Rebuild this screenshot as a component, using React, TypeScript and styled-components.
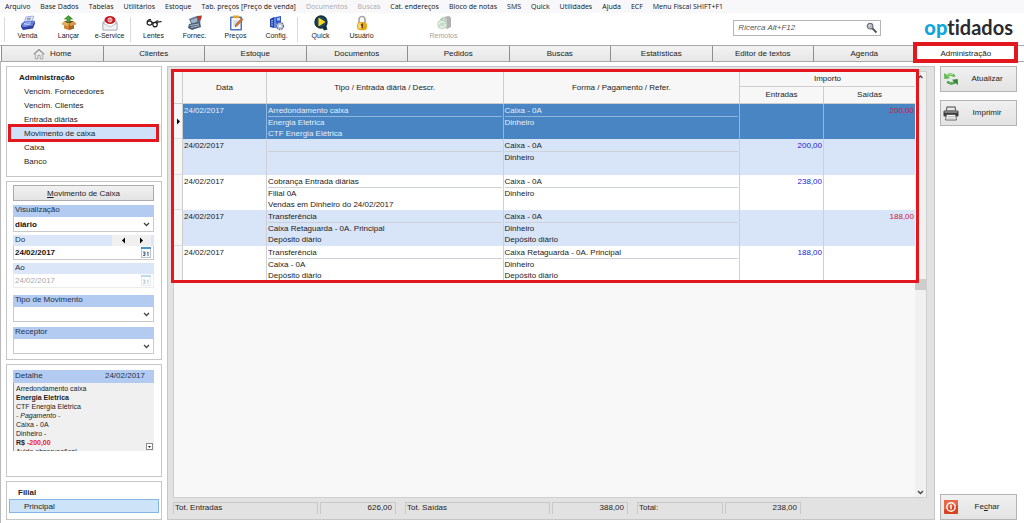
import React, { ReactNode } from "react";
import styled, { createGlobalStyle, css } from "styled-components";

const RED = "#e3181f";
const LINE = "#c6c6c6";

const GlobalStyle = createGlobalStyle`
  * { box-sizing: border-box; }
  body {
    margin: 0;
    background: #fff;
    color: #222;
    font-family: "Liberation Sans", Arial, sans-serif;
    font-size: 8px;
    line-height: 14px;
  }
  button, input, select { font: inherit; color: inherit; margin: 0; padding: 0; }
  svg { display: block; flex: none; }
`;

const Page = styled.div`
  display: flex;
  flex-direction: column;
  min-height: 100vh;
`;

/* ---------- menu bar ---------- */

const MenuBar = styled.nav`
  display: flex;
  gap: 10px;
  height: 13px;
  padding-left: 5px;
  background: #f8f8fa;
  font-family: "Open Sans", "Noto Sans", sans-serif;
  font-size: 7px;
`;

const MenuItem = styled.button`
  border: 0;
  background: none;
  line-height: 13px;
  white-space: nowrap;
  color: #111;
  &:disabled { color: #a9a9a9; }
`;

/* ---------- toolbar ---------- */

const ToolBar = styled.header`
  display: flex;
  align-items: stretch;
  height: 32px;
  padding: 2px 11px 0 4px;
`;

const ToolSeparator = styled.span`
  width: 1px;
  margin: 2px 2px 3px 0;
  background: #dcdcdc;
`;

const Tool = styled.button`
  display: flex;
  flex-direction: column;
  align-items: center;
  width: 41px;
  border: 0;
  background: none;
  font-size: 7px;
  line-height: 10px;
  white-space: nowrap;
  &:disabled { color: #a4a4a4; }
  &:disabled svg { opacity: 0.45; }
`;

const ToolGap = styled.span`
  width: 41px;
`;

const SearchBox = styled.form`
  display: flex;
  align-items: center;
  width: 148px;
  height: 16px;
  margin: 5px 43px 0 auto;
  padding: 0 2px 0 4px;
  border: 1px solid #b5b5b5;
`;

const SearchInput = styled.input`
  flex: 1;
  min-width: 0;
  border: 0;
  outline: 0;
  background: none;
  font-style: italic;
  &::placeholder { color: #555; opacity: 1; }
`;

const Logo = styled.span`
  font-family: Lato, sans-serif;
  font-size: 20px;
  font-weight: 700;
  font-variant-ligatures: none;
  line-height: 24px;
  color: #2b2b2f;
  b { font-weight: 900; color: #12a5dc; }
`;

/* ---------- tabs ---------- */

const TabStrip = styled.nav`
  display: flex;
  height: 17px;
  padding: 0 8px 0 1px;
  border-top: 1px solid #a8a8a8;
  border-bottom: 1px solid #a8a8a8;
  background: #fff;
`;

const Tab = styled.button<{ $active?: boolean }>`
  position: relative;
  display: flex;
  flex: 1 1 0;
  align-items: center;
  justify-content: center;
  gap: 5px;
  border: 0;
  border-left: 1px solid #8e8e8e;
  background: linear-gradient(#f3f3f3, #e6e6e6);
  ${(p) =>
    p.$active &&
    css`
      background: #fff;
      &::after {
        content: "";
        position: absolute;
        inset: -4px -2px -2px -3px;
        border: 4px solid ${RED};
      }
    `}
`;

/* ---------- body columns ---------- */

const Body = styled.div`
  display: flex;
  flex: 1;
  gap: 5px;
  padding: 4px 7px 3px 5px;
  border-left: 1px solid #b9b9b9;
`;

const Sidebar = styled.aside`
  display: flex;
  flex-direction: column;
  gap: 4px;
  width: 156px;
`;

const Panel = styled.section<{ $grow?: boolean; $pad: string }>`
  flex: ${(p) => (p.$grow ? "1 0 auto" : "none")};
  padding: ${(p) => p.$pad};
  border: 1px solid ${LINE};
`;

const PanelTitle = styled.h2`
  height: 14px;
  margin: 0;
  padding-left: 9px;
  font-size: 8px;
  line-height: 16px;
`;

const NavLink = styled.a<{ $marked?: boolean; $current?: boolean }>`
  position: relative;
  display: block;
  height: 14px;
  padding-left: 14px;
  line-height: 16px;
  color: #222;
  text-decoration: none;
  ${(p) =>
    p.$marked &&
    css`
      background: #cfe1f8;
      &::after {
        content: "";
        position: absolute;
        inset: -2px -1px -2px -2px;
        border: 3px solid ${RED};
      }
    `}
  ${(p) =>
    p.$current &&
    css`
      border: 1px solid #84b6e6;
      background: #cce3f8;
      line-height: 13px;
    `}
`;

const WideButton = styled.button`
  display: block;
  width: 100%;
  height: 16px;
  padding-top: 1px;
  border: 1px solid #acacac;
  background: linear-gradient(#f1f1f1, #e4e4e4);
`;

const Field = styled.div<{ $gap: number }>`
  margin-top: ${(p) => p.$gap}px;
`;

const FieldHead = styled.div<{ $light?: boolean }>`
  display: flex;
  align-items: flex-start;
  height: ${(p) => (p.$light ? 11 : 12)}px;
  padding-left: 2px;
  background: ${(p) => (p.$light ? "#dbe6f8" : "#b3cbf1")};
  color: #23314f;
  line-height: 10px;
  label { flex: 1; }
`;

const Stepper = styled.span`
  display: flex;
  width: 42px;
  height: 11px;
  padding-left: 2px;
  background: #f0f0f0;
  border-right: 3px solid #dbe6f8;
`;

const StepButton = styled.button`
  display: flex;
  flex: 1;
  align-items: center;
  justify-content: center;
  border: 0;
  background: none;
`;

const Control = styled.div<{ $tall?: boolean; $off?: boolean }>`
  display: flex;
  align-items: center;
  height: ${(p) => (p.$tall ? 15 : 14)}px;
  padding-right: 2px;
  border: 1px solid ${(p) => (p.$off ? "#ececec" : "#c9c9c9")};
  border-top: 0;
  color: ${(p) => (p.$off ? "#a8a8a8" : "#111")};
  font-weight: ${(p) => (p.$off ? 400 : 700)};
  input, select {
    flex: 1;
    min-width: 0;
    height: 12px;
    padding-left: 1px;
    border: 0;
    outline: 0;
    background: none;
    appearance: none;
    color: inherit;
  }
`;

const IconButton = styled.button`
  border: 0;
  background: none;
  &:disabled { opacity: 0.35; }
`;

const DetailHead = styled.div`
  display: flex;
  justify-content: space-between;
  height: 13px;
  padding: 0 9px 0 2px;
  background: #b3cbf1;
  color: #23314f;
  line-height: 12px;
`;

const DetailBox = styled.div`
  position: relative;
  height: 68px;
  padding: 1px 0 0 2px;
  overflow: hidden;
  border-left: 1px solid #9a9a9a;
  background: #f0f0f0;
  font-size: 7px;
  line-height: 9px;
  p { margin: 0; }
  em { font-style: italic; }
  mark { background: none; color: #ee1c25; }
`;

const ExpandButton = styled.button`
  position: absolute;
  right: 1px;
  bottom: 1px;
  display: flex;
  align-items: center;
  justify-content: center;
  width: 7px;
  height: 7px;
  border: 1px solid #8b8b8b;
  background: #fff;
`;

/* ---------- central grid ---------- */

const Main = styled.main`
  display: flex;
  flex: 1;
  flex-direction: column;
  min-width: 0;
  padding: 4px 7px 5px 5px;
  border: 1px solid ${LINE};
  background: #e2e2e2;
`;

const GridFrame = styled.div`
  display: flex;
  flex: 1;
  border: 1px solid #cfcfcf;
  background: #f8f8f8;
`;

const GridArea = styled.div`
  flex: 1;
  min-width: 0;
`;

const MarkedTable = styled.div`
  position: relative;
  &::after {
    content: "";
    position: absolute;
    inset: -3px -4px -2px -3px;
    border: 3px solid ${RED};
    pointer-events: none;
  }
`;

const Table = styled.table`
  width: 100%;
  table-layout: fixed;
  border-collapse: separate;
  border-spacing: 0;
`;

const Th = styled.th<{ $sub?: boolean }>`
  padding: 0;
  border-right: 1px solid #cdcdcd;
  border-bottom: 1px solid #cdcdcd;
  background: #f7f7f7;
  font-weight: 400;
  line-height: ${(p) => (p.$sub ? 16 : 14)}px;
  &:last-child { border-right: 0; }
`;

const Row = styled.tr<{ $selected?: boolean }>`
  --line: #cdd0d6;
  height: 35px;
  background: #fff;
  line-height: 12px;
  &:nth-child(even) {
    height: 36px;
    background: #d8e4f7;
  }
  ${(p) =>
    p.$selected &&
    css`
      --line: #8fb6de;
      background: #4985c2;
      color: #e6effa;
    `}
`;

const Td = styled.td<{ $tone?: "in" | "out" }>`
  padding: 0 1px;
  border-right: 1px solid var(--line);
  vertical-align: top;
  text-align: ${(p) => (p.$tone ? "right" : "left")};
  line-height: 13px;
  color: ${(p) => (p.$tone === "in" ? "#2020dd" : p.$tone === "out" ? "#d01540" : "inherit")};
  &:last-child { border-right: 0; }
`;

const MarkerCell = styled.td`
  padding: 0 0 0 2px;
  border-right: 1px solid #cdcdcd;
  border-bottom: 1px solid #dedede;
  background: #f7f7f7;
`;

const Line = styled.div<{ $first?: boolean }>`
  height: ${(p) => (p.$first ? 13 : 11)}px;
  border-bottom: ${(p) => (p.$first ? "1px solid var(--line)" : "0")};
  line-height: ${(p) => (p.$first ? 13 : 11)}px;
  white-space: nowrap;
`;

const ScrollTrack = styled.div`
  display: flex;
  flex-direction: column;
  align-items: center;
  width: 11px;
  background: #f1f1f1;
`;

const ScrollSpace = styled.span`
  flex: 1;
`;

const ScrollThumb = styled.span`
  width: 11px;
  height: 11px;
  background: #cdcdcd;
`;

const Totals = styled.footer`
  display: flex;
  gap: 9px;
  padding-top: 4px;
`;

const TotalGroup = styled.div`
  display: flex;
  gap: 2px;
`;

const TotalCell = styled.span<{ $w: number; $right?: boolean }>`
  width: ${(p) => p.$w}px;
  height: 12px;
  padding: 0 3px 0 1px;
  border: 1px solid #c9c9c9;
  border-bottom: 0;
  line-height: 10px;
  text-align: ${(p) => (p.$right ? "right" : "left")};
`;

/* ---------- right actions ---------- */

const Actions = styled.aside`
  display: flex;
  flex-direction: column;
  gap: 8px;
  width: 77px;
`;

const ActionButton = styled.button<{ $bottom?: boolean }>`
  display: flex;
  align-items: center;
  height: 26px;
  padding: 0 1px 0 2px;
  margin-top: ${(p) => (p.$bottom ? "auto" : "0")};
  border: 1px solid #b4b4b4;
  background: linear-gradient(#f0f0f0, #e3e3e3);
  span { flex: 1; text-align: center; }
`;

/* ---------- drawings ---------- */

const Svg = ({ children, s = 16 }: { children: ReactNode; s?: number }) => (
  <svg width={s} height={s} viewBox="0 0 16 16" aria-hidden="true">
    {children}
  </svg>
);

const RegisterIcon = () => (
  <Svg>
    <path d="M6 2l7-1 1 1-3 5-7 1z" fill="#e9eefb" stroke="#7d8ec4" strokeWidth=".7" />
    <path d="M7 3.500l4-.5M6.500 5l4-.5" stroke="#5d6fb5" strokeWidth=".8" />
    <path d="M1 9l3-2.500 10.500-1-2 5-9.500 1.500z" fill="#5b78dd" />
    <path d="M1 9l2 3 9.500-1.500 2-5 .5 3-2 5-10 1.500-2-3z" fill="#2b3fa5" />
    <path d="M4 8.500l7-.9M3.700 10l7-.9" stroke="#dce4ff" strokeWidth=".8" />
  </Svg>
);

const BoxIcon = () => (
  <Svg>
    <path d="M3 6.500h10l2.500 2.500-2.500 1v3.500L8 15l-5-1.500V10L.5 9z" fill="#c98335" />
    <path d="M3 6.500L8 8.500l5-2-5-1z" fill="#6d3f12" />
    <path d="M3 6.500L8 8.500 6.500 11.500.5 9z" fill="#e8ad60" />
    <path d="M13 6.500L8 8.500l1.500 3 6-2.500z" fill="#d9974a" />
    <path d="M8 8.500l1.500 3 3.500-1.500v3.500L8 15z" fill="#a9621d" />
    <path d="M6 7.500V4H3.500L7.500.6 11.500 4H9v3.500z" fill="#4aa832" stroke="#1f6d16" strokeWidth=".6" />
  </Svg>
);

const MailIcon = () => (
  <Svg>
    <path d="M1 7l7-5 7 5v8H1z" fill="#d5d8de" stroke="#9599a3" strokeWidth=".6" />
    <path d="M3 5h10v5l-5 3-5-3z" fill="#fff" />
    <ellipse cx="8" cy="5" rx="5.500" ry="4" fill="#c31f26" />
    <circle cx="8" cy="5" r="2" fill="none" stroke="#fff" strokeWidth=".9" />
    <path d="M8 3.500V6" stroke="#fff" />
    <path d="M1 8l7 4 7-4v7H1z" fill="#f0f1f4" stroke="#9599a3" strokeWidth=".6" />
  </Svg>
);

const GlassesIcon = () => (
  <Svg>
    <g fill="none" stroke="#1c1c1c" strokeWidth="1.200">
      <ellipse cx="3.600" cy="8" rx="2.500" ry="2.100" />
      <ellipse cx="9" cy="9.600" rx="2.200" ry="2.300" />
      <path d="M6 7.800q.8-.6 1.200.4M1.200 7q.3-2 2.300-2.300h1.500M10.800 8.400q1-2 4.700-1.800M9.500 7.200q.8-1.500 2.700-1.200" />
    </g>
  </Svg>
);

const SupplierIcon = () => (
  <Svg>
    <path d="M2 4l8-3 4 1-1 7-8 2z" fill="#56728f" />
    <path d="M3.500 5l7-2.500L10 7 5 8.500z" fill="#9fb4c9" />
    <path d="M10 1l5-.5-1 4-3 1z" fill="#b6372f" />
    <path d="M2 9l11-2 1 5-9 3-4-2z" fill="#4a5f78" />
    <path d="M3 10.500l9-1.500M4 12.500l8-1.800" stroke="#c6d4e2" strokeWidth=".8" />
  </Svg>
);

const ClipboardIcon = () => (
  <Svg>
    <rect x="2" y="1.500" width="12" height="14" rx="1" fill="#4f76b8" />
    <rect x="3.500" y="3" width="9" height="11" fill="#fdfdfd" />
    <rect x="5" y=".5" width="6" height="2.800" rx=".8" fill="#e1a62e" />
    <path d="M5 6h5M5 8h4M5 10h3" stroke="#9db3da" strokeWidth=".8" />
    <path d="M7 12l1-3 5.500-6 1.500 1.500-5.500 6z" fill="#dd7c31" stroke="#7b3d14" strokeWidth=".5" />
  </Svg>
);

const ConfigIcon = () => (
  <Svg>
    <path d="M1 4l4-2v11l-4-1z" fill="#2743a8" />
    <rect x="5" y="2" width="3.500" height="11" fill="#5c86ea" />
    <path d="M7 2l5-1v7H7z" fill="#2f55c8" />
    <path d="M8 3l3-.6v3.200H8z" fill="#a9c2fb" />
    <path d="M2 6l2-.6M2 8l2-.4M2 10h2" stroke="#d3defc" strokeWidth=".8" />
    <circle cx="11" cy="11" r="3.600" fill="#b4bfd4" stroke="#5d6c92" strokeWidth="1.200" strokeDasharray="1.600 1" />
    <circle cx="11" cy="11" r="1.300" fill="#fff" />
  </Svg>
);

const QuickIcon = () => (
  <Svg>
    <circle cx="8" cy="7" r="5.800" fill="#1c4a66" stroke="#14303d" strokeWidth="1.800" />
    <path d="M9 12l4-2 1.500 4.500-3.500 1z" fill="#14303d" />
    <path d="M5.500 2.600l7 4.400-7 4.400z" fill="#ffd91a" />
  </Svg>
);

const LockIcon = () => (
  <Svg>
    <path d="M5 8V4.500a3 3 0 0 1 6 0V8" fill="none" stroke="#a8a8a8" strokeWidth="1.700" />
    <rect x="3" y="7" width="10" height="8.300" rx="3.500" fill="#e9a81c" />
    <rect x="4" y="8" width="4" height="6" rx="2" fill="#f9d870" />
    <path d="M7 10l1.200-.6v3.800" fill="none" stroke="#5a3a08" strokeWidth="1.400" />
  </Svg>
);

const RemoteIcon = () => (
  <Svg>
    <path d="M8 2l5-1 2 1.500V12l-4 2-3-2z" fill="#555" />
    <path d="M8 2l3 1.500V14l-3-2z" fill="#8a8a8a" />
    <circle cx="6" cy="9.500" r="4.800" fill="#7fb584" />
    <path d="M3 9.500a3 3 0 0 1 5-2M9 9.500a3 3 0 0 1-5 2" stroke="#fff" fill="none" />
    <path d="M3.500 4.500l4-3v5z" fill="#4a9a52" />
  </Svg>
);

const SearchIcon = () => (
  <Svg s={12}>
    <circle cx="5.500" cy="5.500" r="3.800" fill="#b9bcc2" stroke="#70747d" strokeWidth="1.600" />
    <path d="M4 5.500a1.600 1.600 0 0 1 1.600-1.600" stroke="#fff" fill="none" />
    <path d="M8.500 8.500l5.500 5.500" stroke="#4d4d4d" strokeWidth="2.400" />
  </Svg>
);

const HomeIcon = () => (
  <Svg s={12}>
    <path d="M3 8v6.500h3.500V10h3v4.500H13V8" fill="#e4e4e4" stroke="#999" />
    <path d="M1 8.500l7-6.500 7 6.500" fill="none" stroke="#8c8c8c" strokeWidth="1.700" />
  </Svg>
);

const RefreshIcon = () => (
  <Svg>
    <path d="M1 2l.3 6 5.700-.8-1.800-1.700q2.800-2 5.800.7l1.500-1.700Q8.500.6 3.200 3.800z" fill="#58b947" />
    <path d="M15 14l-.3-6-5.700.8 1.800 1.700q-2.800 2-5.800-.7L3.500 11.500q4 3.900 9.300.7z" fill="#2f8b33" />
    <path d="M3.500 4.700q3.500-2.500 6.500-1" stroke="#b4e79b" fill="none" />
    <path d="M5 11.500q3.500 2 6.500.2" stroke="#79c765" fill="none" />
  </Svg>
);

const PrinterIcon = () => (
  <Svg>
    <path d="M3.500 1.500h9l.5 4H3z" fill="#444" />
    <path d="M4.300 2.500h7.400l.3 3H4z" fill="#e9e9e9" />
    <rect x=".5" y="5.500" width="15" height="6" rx="1.200" fill="#3c3c3c" />
    <path d="M1.500 7h13" stroke="#a9a9a9" strokeWidth="1.200" />
    <path d="M3.500 9.500h9l1 5.500h-11z" fill="#f7f7f7" stroke="#4a4a4a" strokeWidth=".8" />
    <path d="M4.500 11.500h7M4.300 13.200h7.400" stroke="#aaa" strokeWidth=".7" />
  </Svg>
);

const PowerIcon = () => (
  <Svg>
    <rect x="1" y="1" width="14" height="14" rx="1" fill="#d9421f" />
    <path d="M1 1h14v5Q8 7 1 11z" fill="#e8694a" />
    <circle cx="8" cy="8" r="4.200" fill="none" stroke="#fff" strokeWidth="1.400" />
    <path d="M8 5.800v4.400" stroke="#fff" strokeWidth="1.500" />
  </Svg>
);

const CalendarIcon = () => (
  <svg width="10" height="11" viewBox="0 0 10 11" aria-hidden="true">
    <rect x=".5" y=".5" width="9" height="10" fill="#f6fafd" stroke="#b9c6d2" />
    <path d="M0 1h10" stroke="#4d94c4" strokeWidth="2" />
    <path d="M2 5h2v3.500H2M2.500 6.700H4M6 5.500l1-.5v4" fill="none" stroke="#44566b" strokeWidth=".9" />
  </svg>
);

const Chevron = ({ up }: { up?: boolean }) => (
  <svg width="9" height="10" viewBox="0 0 9 10" aria-hidden="true">
    <path d={up ? "M2.500 6l2-2 2 2" : "M2 4l2.500 2.500L7 4"} fill="none" stroke="#444" strokeWidth="1.300" />
  </svg>
);

const Triangle = ({ left }: { left?: boolean }) => (
  <svg width="5" height="7" viewBox="0 0 5 7" aria-hidden="true">
    <path d={left ? "M4 .5v6l-3-3z" : "M1 .5v6l3-3z"} fill="#000" />
  </svg>
);

const Dot = () => (
  <svg width="3" height="3" viewBox="0 0 3 3" aria-hidden="true">
    <path d="M0 1h3L1.500 3z" fill="#222" />
  </svg>
);

/* ---------- data ---------- */

const menu: [string, boolean?][] = [
  ["Arquivo"], ["Base Dados"], ["Tabelas"], ["Utilitários"], ["Estoque"],
  ["Tab. preços [Preço de venda]"], ["Documentos", true], ["Buscas", true],
  ["Cat. endereços"], ["Bloco de notas"], ["SMS"], ["Quick"], ["Utilidades"],
  ["Ajuda"], ["ECF"], ["Menu Fiscal SHIFT+F1"],
];

const toolGroups: [string, () => React.JSX.Element][][] = [
  [["Venda", RegisterIcon], ["Lançar", BoxIcon], ["e-Service", MailIcon]],
  [["Lentes", GlassesIcon], ["Fornec.", SupplierIcon], ["Preços", ClipboardIcon], ["Config.", ConfigIcon]],
  [["Quick", QuickIcon], ["Usuário", LockIcon]],
];

const tabs = [
  "Home", "Clientes", "Estoque", "Documentos", "Pedidos", "Buscas",
  "Estatísticas", "Editor de textos", "Agenda", "Administração",
];

const sections = [
  "Vencim. Fornecedores", "Vencim. Clientes", "Entrada diárias",
  "Movimento de caixa", "Caixa", "Banco",
];

interface Movement {
  tipo: string[];
  forma: string[];
  entrada?: string;
  saida?: string;
}

const movements: Movement[] = [
  { tipo: ["Arredondamento caixa", "Energia Eletrica", "CTF Energia Elétrica"], forma: ["Caixa - 0A", "Dinheiro"], saida: "200,00" },
  { tipo: [""], forma: ["Caixa - 0A", "Dinheiro"], entrada: "200,00" },
  { tipo: ["Cobrança Entrada diárias", "Filial 0A", "Vendas em Dinheiro do 24/02/2017"], forma: ["Caixa - 0A", "Dinheiro"], entrada: "238,00" },
  { tipo: ["Transferência", "Caixa Retaguarda - 0A. Principal", "Depósito diário"], forma: ["Caixa - 0A", "Dinheiro", "Depósito diário"], saida: "188,00" },
  { tipo: ["Transferência", "Caixa - 0A", "Depósito diário"], forma: ["Caixa Retaguarda - 0A. Principal", "Dinheiro", "Depósito diário"], entrada: "188,00" },
];

const totals: [string, string, number][] = [
  ["Tot. Entradas", "626,00", 145],
  ["Tot. Saídas", "388,00", 145],
  ["Total:", "238,00", 86],
];

const Lines = ({ items }: { items: string[] }) => (
  <>
    {items.map((text, i) => (
      <Line key={i} $first={i === 0}>{text}</Line>
    ))}
  </>
);

export default function App() {
  return (
    <Page>
      <GlobalStyle />
      <MenuBar>
        {menu.map(([label, off]) => (
          <MenuItem key={label} disabled={off}>{label}</MenuItem>
        ))}
      </MenuBar>

      <ToolBar>
        {toolGroups.map((group, i) => (
          <React.Fragment key={i}>
            <ToolSeparator />
            {group.map(([label, Icon]) => (
              <Tool key={label}><Icon />{label}</Tool>
            ))}
          </React.Fragment>
        ))}
        <ToolGap />
        <Tool disabled><RemoteIcon />Remotos</Tool>
        <SearchBox>
          <SearchInput aria-label="Ricerca" placeholder="Ricerca Alt+F12" />
          <SearchIcon />
        </SearchBox>
        <Logo><b>op</b>tidados</Logo>
      </ToolBar>

      <TabStrip>
        {tabs.map((label) => (
          <Tab key={label} $active={label === "Administração"}>
            {label === "Home" && <HomeIcon />}
            {label}
          </Tab>
        ))}
      </TabStrip>

      <Body>
        <Sidebar>
          <Panel $pad="3px 3px 8px">
            <PanelTitle>Administração</PanelTitle>
            {sections.map((label) => (
              <NavLink key={label} href="#" $marked={label === "Movimento de caixa"}>{label}</NavLink>
            ))}
          </Panel>

          <Panel $pad="3px 7px 5px 6px">
            <WideButton><u>M</u>ovimento de Caixa</WideButton>
            <Field $gap={4}>
              <FieldHead><label htmlFor="view">Visualização</label></FieldHead>
              <Control $tall>
                <select id="view"><option>diário</option></select>
                <Chevron />
              </Control>
            </Field>
            <Field $gap={3}>
              <FieldHead $light>
                <label htmlFor="from">Do</label>
                <Stepper>
                  <StepButton aria-label="Dia anterior"><Triangle left /></StepButton>
                  <StepButton aria-label="Dia seguinte"><Triangle /></StepButton>
                </Stepper>
              </FieldHead>
              <Control>
                <input id="from" defaultValue="24/02/2017" />
                <IconButton aria-label="Calendário"><CalendarIcon /></IconButton>
              </Control>
            </Field>
            <Field $gap={3}>
              <FieldHead $light><label htmlFor="to">Ao</label></FieldHead>
              <Control $off>
                <input id="to" defaultValue="24/02/2017" disabled />
                <IconButton aria-label="Calendário" disabled><CalendarIcon /></IconButton>
              </Control>
            </Field>
            <Field $gap={7}>
              <FieldHead><label htmlFor="kind">Tipo de Movimento</label></FieldHead>
              <Control $tall>
                <select id="kind"><option></option></select>
                <Chevron />
              </Control>
            </Field>
            <Field $gap={5}>
              <FieldHead><label htmlFor="receiver">Receptor</label></FieldHead>
              <Control $tall>
                <select id="receiver"><option></option></select>
                <Chevron />
              </Control>
            </Field>
          </Panel>

          <Panel $grow $pad="5px 7px 0 6px">
            <DetailHead><span>Detalhe</span><span>24/02/2017</span></DetailHead>
            <DetailBox>
              <p>Arredondamento caixa</p>
              <p><b>Energia Eletrica</b></p>
              <p>CTF Energia Elétrica</p>
              <p><em>- Pagamento -</em></p>
              <p>Caixa - 0A</p>
              <p>Dinheiro -</p>
              <p><b>R$ <mark>-200,00</mark></b></p>
              <p>Avido observações!</p>
              <ExpandButton aria-label="Expandir"><Dot /></ExpandButton>
            </DetailBox>
          </Panel>

          <Panel $pad="3px 2px 6px">
            <PanelTitle>Filial</PanelTitle>
            <NavLink href="#" $current>Principal</NavLink>
          </Panel>
        </Sidebar>

        <Main>
          <GridFrame>
            <GridArea>
              <MarkedTable>
                <Table>
                  <colgroup>
                    <col style={{ width: 9 }} />
                    <col style={{ width: 84 }} />
                    <col />
                    <col />
                    <col style={{ width: 84 }} />
                    <col style={{ width: 91 }} />
                  </colgroup>
                  <thead>
                    <tr>
                      <Th rowSpan={2} />
                      <Th rowSpan={2}>Data</Th>
                      <Th rowSpan={2}>Tipo / Entrada diária / Descr.</Th>
                      <Th rowSpan={2}>Forma / Pagamento / Refer.</Th>
                      <Th colSpan={2}>Importo</Th>
                    </tr>
                    <tr>
                      <Th $sub>Entradas</Th>
                      <Th $sub>Saídas</Th>
                    </tr>
                  </thead>
                  <tbody>
                    {movements.map((m, i) => (
                      <Row key={i} $selected={i === 0}>
                        <MarkerCell>{i === 0 && <Triangle />}</MarkerCell>
                        <Td>24/02/2017</Td>
                        <Td><Lines items={m.tipo} /></Td>
                        <Td><Lines items={m.forma} /></Td>
                        <Td $tone="in">{m.entrada}</Td>
                        <Td $tone="out">{m.saida}</Td>
                      </Row>
                    ))}
                  </tbody>
                </Table>
              </MarkedTable>
            </GridArea>
            <ScrollTrack>
              <Chevron up />
              <ScrollSpace />
              <ScrollThumb />
              <ScrollSpace />
              <Chevron />
            </ScrollTrack>
          </GridFrame>
          <Totals>
            {totals.map(([label, value, w]) => (
              <TotalGroup key={label}>
                <TotalCell $w={w}>{label}</TotalCell>
                <TotalCell $w={76} $right>{value}</TotalCell>
              </TotalGroup>
            ))}
          </Totals>
        </Main>

        <Actions>
          <ActionButton><RefreshIcon /><span>Atualizar</span></ActionButton>
          <ActionButton><PrinterIcon /><span>Imprimir</span></ActionButton>
          <ActionButton $bottom><PowerIcon /><span>Fe<u>c</u>har</span></ActionButton>
        </Actions>
      </Body>
    </Page>
  );
}
